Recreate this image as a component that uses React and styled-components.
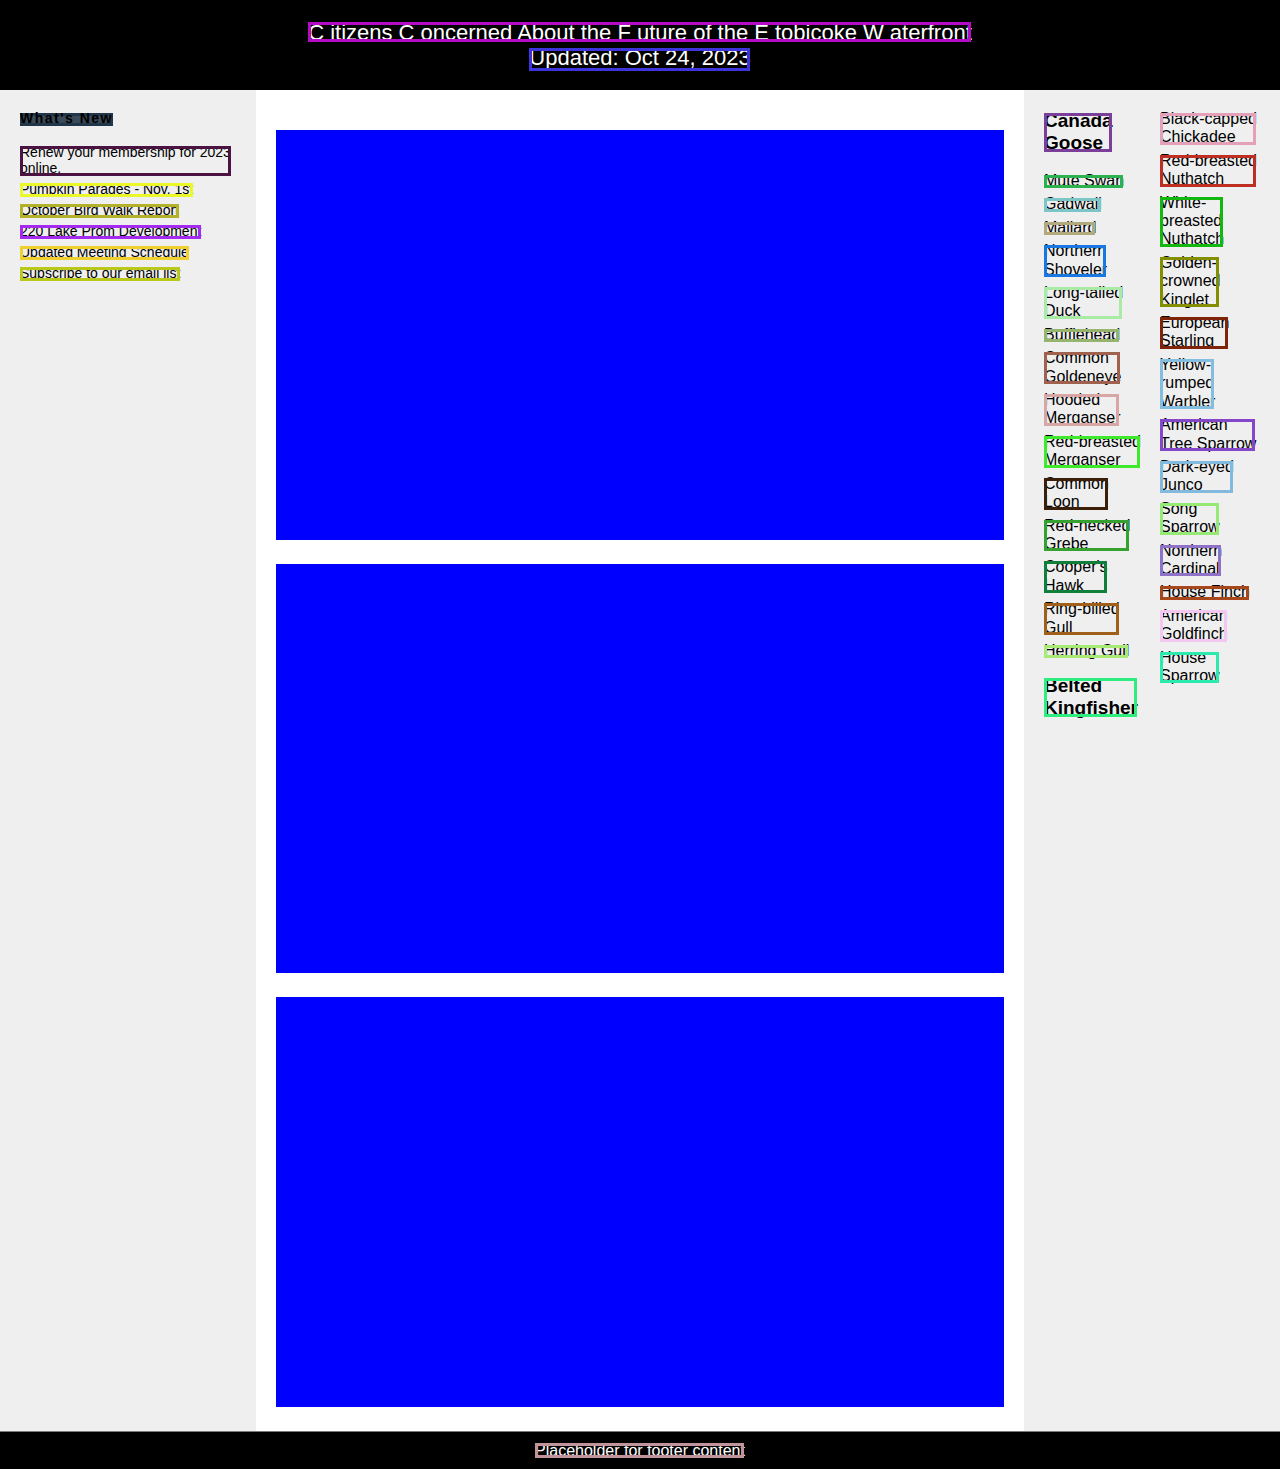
import styled, { createGlobalStyle, css } from 'styled-components'

const news = [
  { text: 'Renew your membership for 2023\nonline.', c: '#4b1341' },
  { text: 'Pumpkin Parades - Nov. 1st', c: '#eaf82a' },
  { text: 'October Bird Walk Report', c: '#b3b12a' },
  { text: '220 Lake Prom Development', c: '#a52af0' },
  { text: 'Updated Meeting Schedule', c: '#f0d02e' },
  { text: 'Subscribe to our email list', c: '#b9c81a' },
]

const birdsLeft = [
  { name: 'Canada\nGoose', c: '#7a3f98', head: 'top' },
  { name: 'Mute Swan', c: '#2bb24f' },
  { name: 'Gadwall', c: '#7cc6c8' },
  { name: 'Mallard', c: '#b2a97c' },
  { name: 'Northern\nShoveler', c: '#1877e0' },
  { name: 'Long-tailed\nDuck', c: '#a9eba4' },
  { name: 'Bufflehead', c: '#96b46e' },
  { name: 'Common\nGoldeneye', c: '#a0614e' },
  { name: 'Hooded\nMerganser', c: '#d9a6a6' },
  { name: 'Red-breasted\nMerganser', c: '#3ee82a' },
  { name: 'Common\nLoon', c: '#3b1f08' },
  { name: 'Red-necked\nGrebe', c: '#35a12e' },
  { name: "Cooper's\nHawk", c: '#0f7f3a' },
  { name: 'Ring-billed\nGull', c: '#a1601a' },
  { name: 'Herring Gull', c: '#a8ea74' },
  { name: 'Belted\nKingfisher', c: '#2fec7e', head: 'bottom' },
]

const birdsRight = [
  { name: 'Black-capped\nChickadee', c: '#e5a0b9' },
  { name: 'Red-breasted\nNuthatch', c: '#bf2e22' },
  { name: 'White-\nbreasted\nNuthatch', c: '#13b80f' },
  { name: 'Golden-\ncrowned\nKinglet', c: '#848f00' },
  { name: 'European\nStarling', c: '#7f2409' },
  { name: 'Yellow-\nrumped\nWarbler', c: '#83bde0' },
  { name: 'American\nTree Sparrow', c: '#8547c9' },
  { name: 'Dark-eyed\nJunco', c: '#82bade' },
  { name: 'Song\nSparrow', c: '#96ea74' },
  { name: 'Northern\nCardinal', c: '#8f72c7' },
  { name: 'House Finch', c: '#a8481a' },
  { name: 'American\nGoldfinch', c: '#f4c7f0' },
  { name: 'House\nSparrow', c: '#2ce9ae' },
]

const App = () => {
  return (
    <>
      <GlobalStyle />
      <Header>
        <Title $c="#b40cc4">
          <Cap>C</Cap>itizens <Cap>C</Cap>oncerned About the <Cap>F</Cap>uture
          of the <Cap>E</Cap>tobicoke <Cap>W</Cap>aterfront
        </Title>
        <Updated $c="#3d34dc">Updated: Oct 24, 2023</Updated>
      </Header>
      <Layout>
        <LeftSide>
          <NewsHeading>What's New</NewsHeading>
          <NewsList>
            {news.map((n) => (
              <NewsItem key={n.text} $c={n.c}>
                {n.text}
              </NewsItem>
            ))}
          </NewsList>
        </LeftSide>
        <Main>
          <Video />
          <Video />
          <Video />
        </Main>
        <RightSide>
          {[birdsLeft, birdsRight].map((col, i) => (
            <BirdList key={i}>
              {col.map((b) =>
                b.head ? (
                  <BirdHeading key={b.name} $c={b.c} $pos={b.head}>
                    {b.name}
                  </BirdHeading>
                ) : (
                  <Bird key={b.name} $c={b.c}>
                    {b.name}
                  </Bird>
                )
              )}
            </BirdList>
          ))}
        </RightSide>
      </Layout>
      <Footer>
        <FooterText $c="#c1939b">Placeholder for footer content</FooterText>
      </Footer>
    </>
  )
}

export default App

const GlobalStyle = createGlobalStyle`
  body {
    margin: 0;
    background: #fff;
    font-family: 'Liberation Sans', Arial, sans-serif;
    color: #000;
  }
`

// coloured frame drawn over a text block
const framed = css`
  position: relative;
  &::after {
    content: '';
    position: absolute;
    top: 3px;
    bottom: 2px;
    left: 0;
    right: 1px;
    border: 3px solid ${(p) => p.$c};
    pointer-events: none;
  }
`

const Header = styled.header`
  background: #000;
  color: #fff;
  padding: 20px 0 19px;
  display: flex;
  flex-direction: column;
  align-items: center;
  font-size: 22px;
`

const Title = styled.h1`
  ${framed}
  margin: 0;
  font-size: 22px;
  font-weight: normal;
  line-height: 25px;
  &::after {
    top: 2px;
    bottom: 3px;
  }
`

const Cap = styled.span`
  margin-right: 6px;
`

const Updated = styled.div`
  ${framed}
  line-height: 26px;
  &::after {
    bottom: 0;
  }
`

const Layout = styled.div`
  display: grid;
  grid-template-columns: 256px 1fr 256px;
`

const LeftSide = styled.aside`
  background: #efefef;
  padding: 20px;
  font-size: 14px;
`

const NewsHeading = styled.h2`
  position: relative;
  z-index: 0;
  display: inline-block;
  margin: 0;
  font-size: 14px;
  font-weight: bold;
  letter-spacing: 1.5px;
  line-height: 16px;
  &::before {
    content: '';
    position: absolute;
    z-index: -1;
    top: 3px;
    bottom: 0;
    left: 0;
    right: 0;
    background: #3a4a58;
    border: 3px solid #22364a;
  }
`

const NewsList = styled.ul`
  list-style: none;
  margin: 18px 0 0;
  padding: 0;
  display: flex;
  flex-direction: column;
  align-items: flex-start;
  gap: 5px;
`

const NewsItem = styled.li`
  ${framed}
  width: max-content;
  white-space: pre-line;
  line-height: 16px;
  &::after {
    top: 2px;
    bottom: 0;
    right: 0;
  }
`

const Main = styled.main`
  padding: 40px 20px 24px;
  display: flex;
  flex-direction: column;
  gap: 24px;
`

const Video = styled.div`
  width: 100%;
  aspect-ratio: 16 / 9;
  background: #0000ff;
`

const RightSide = styled.aside`
  background: #efefef;
  padding: 20px;
  display: grid;
  grid-template-columns: 100px 100px;
  column-gap: 16px;
  align-items: start;
  font-size: 16px;
`

const BirdList = styled.ul`
  list-style: none;
  margin: 0;
  padding: 0;
  display: flex;
  flex-direction: column;
  align-items: flex-start;
  gap: 5px;
`

const Bird = styled.li`
  ${framed}
  width: max-content;
  white-space: pre-line;
  line-height: 18.4px;
`

const BirdHeading = styled.li`
  ${framed}
  width: max-content;
  white-space: pre-line;
  font-size: 19px;
  font-weight: bold;
  line-height: 22px;
  margin-bottom: ${(p) => (p.$pos === 'top' ? '13px' : '0')};
  margin-top: ${(p) => (p.$pos === 'bottom' ? '10px' : '0')};
`

const Footer = styled.footer`
  background: #000;
  border-top: 1px solid #7a7a7a;
  color: #fff;
  padding: 10px 0;
  display: flex;
  justify-content: center;
  font-size: 16px;
`

const FooterText = styled.div`
  ${framed}
  line-height: 18px;
  &::after {
    top: 1px;
    bottom: 2px;
  }
`
